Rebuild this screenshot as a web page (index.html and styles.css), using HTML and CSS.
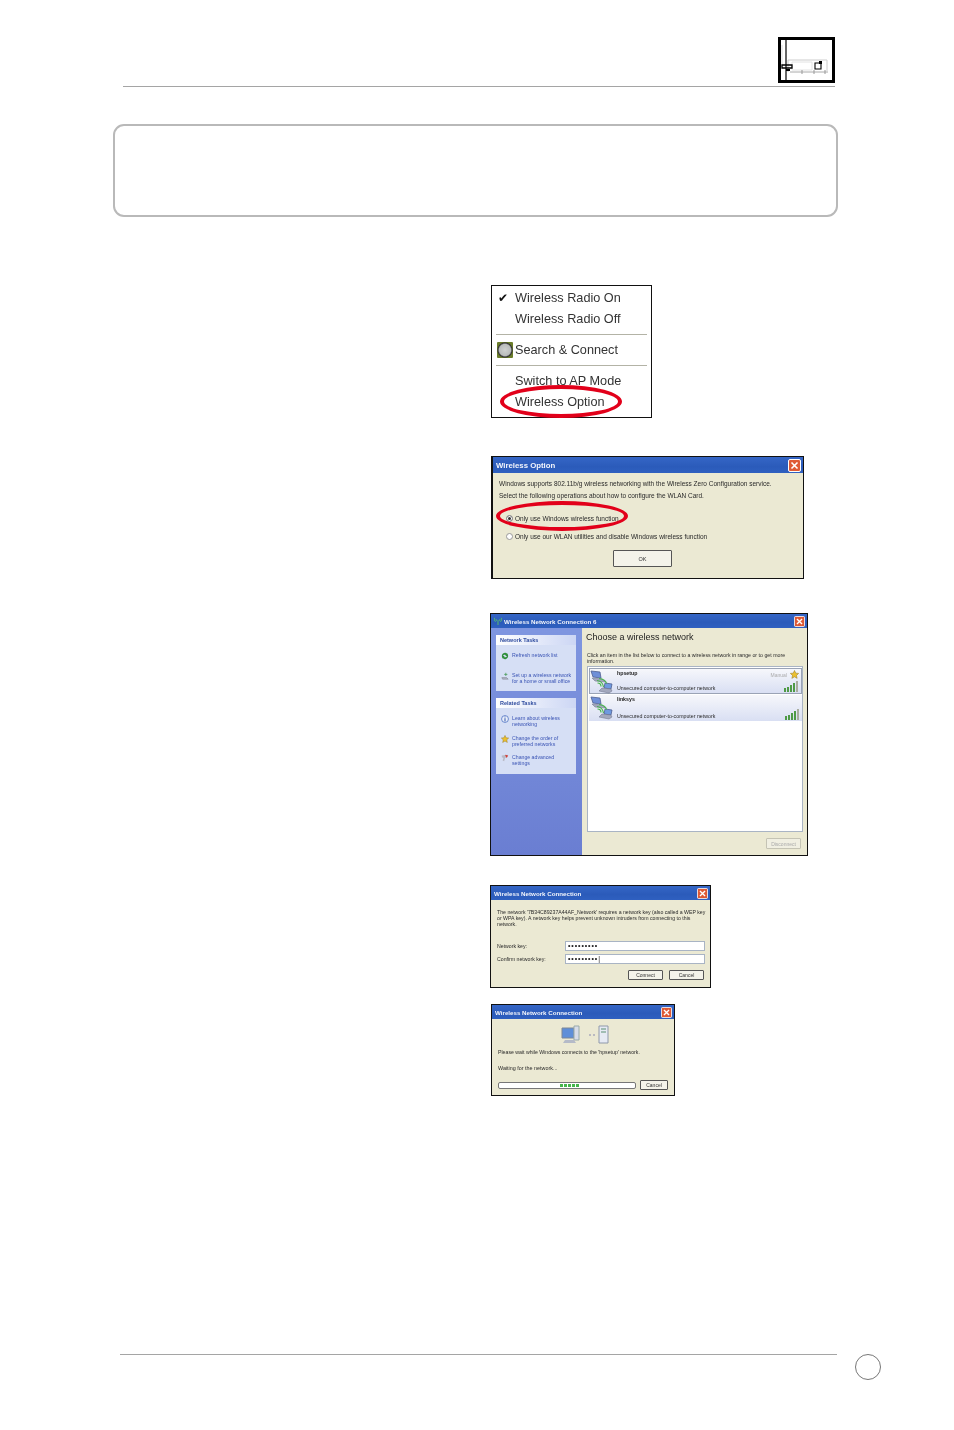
FILE: index.html
```html
<!DOCTYPE html>
<html lang="en">
<head>
  <meta charset="utf-8">
  <title>Wireless Option</title>
  <link rel="stylesheet" href="styles.css">
</head>
<body>
  <svg class="defs" aria-hidden="true">
    <symbol id="ico-close" viewBox="0 0 13 13">
      <rect x="0.5" y="0.5" width="12" height="12" rx="1.5" fill="#df5a35" stroke="#fff"/>
      <path d="M3.5 3.5l6 6M9.5 3.5l-6 6" stroke="#fff" stroke-width="1.6"/>
    </symbol>
    <symbol id="ico-star" viewBox="0 0 10 10">
      <path d="M5 .5l1.4 3 3.2.3-2.4 2.2.7 3.3L5 7.6 2.1 9.3l.7-3.3L.4 3.8l3.2-.3z" fill="#ecc02e" stroke="#9a7d22" stroke-width=".6"/>
    </symbol>
    <symbol id="ico-net" viewBox="0 0 24 24">
      <path d="M1 1l9 1 1 6-8-1z" fill="#6f8fd8" stroke="#4f5f90" stroke-width=".8"/>
      <path d="M2 8l10 1 3 3-10-1z" fill="#a3a8bd" stroke="#6a7088" stroke-width=".5"/>
      <path d="M15 13l7 1-1 5-7-1z" fill="#6f9ae0" stroke="#4f5f90" stroke-width=".8"/>
      <path d="M12 18l9 1 1 2-3 2-10-2z" fill="#a3a8bd" stroke="#6a7088" stroke-width=".5"/>
      <path d="M7 10.500c4 .5 6 3 6.500 6.500M9 8.500c4.500 .5 7 3 7.500 5M7.500 13c2 0 3.500 1.500 3.500 3.500" fill="none" stroke="#46b54b" stroke-width="1.200"/>
    </symbol>
    <symbol id="ico-bars" viewBox="0 0 15 11">
      <path d="M0 7h2v4H0z" fill="#4f9a46"/>
      <path d="M3 6h2v5H3z" fill="#4f9a46"/>
      <path d="M6 4h2v7H6z" fill="#4f9a46"/>
      <path d="M9 2h2v9H9z" fill="#4f9a46"/>
      <path d="M12 0h2v11h-2z" fill="#a9ad9f"/>
    </symbol>
  </svg>

  <div class="page">
    <header class="page-head">
      <svg class="chapter-mark" viewBox="0 0 57 46">
        <rect x="1.500" y="1.500" width="54" height="43" fill="#fff" stroke="#000" stroke-width="3"/>
        <path d="M8 2v42" stroke="#000" stroke-width="1.200"/>
        <path d="M4 8v22" stroke="#ddd"/>
        <path d="M10 23h39v11M10 23v12" fill="none" stroke="#ccc"/>
        <path d="M14 25h20v8H14z" fill="none" stroke="#e2e2e2"/>
        <path d="M12 35h38" stroke="#aaa"/>
        <path d="M24 33v4M36 33v4M47 33v4" stroke="#999"/>
        <path d="M37 26h6v6h-6z" fill="none" stroke="#000" stroke-width="1.100"/>
        <path d="M41 24h3v3h-3z" fill="#000"/>
        <path d="M4 28h10v3H4z" fill="none" stroke="#000" stroke-width="1.300"/>
        <path d="M8 32h4v2H8z" fill="#000"/>
      </svg>
    </header>

    <div class="note-box"></div>

    <main class="shots">
      <section class="shot tray-menu">
        <div class="tray-item"><span class="tray-tick">&#10004;</span>Wireless Radio On</div>
        <div class="tray-item">Wireless Radio Off</div>
        <hr class="tray-sep">
        <div class="tray-item">
          <span class="tray-search"></span>Search &amp; Connect
        </div>
        <hr class="tray-sep">
        <div class="tray-item tray-gap">Switch to AP Mode</div>
        <div class="tray-item">Wireless Option</div>
        <span class="ring ring-menu"></span>
      </section>

      <section class="shot xp option-dialog">
        <div class="titlebar">Wireless Option<svg class="close"><use href="#ico-close"/></svg></div>
        <div class="option-body">
          <p>Windows supports 802.11b/g wireless networking with the Wireless Zero Configuration service.</p>
          <p>Select the following operations about how to configure the WLAN Card.</p>
          <label class="radio first"><span class="radio-dot on"></span>Only use Windows wireless function</label>
          <label class="radio"><span class="radio-dot"></span>Only use our WLAN utilities and disable Windows wireless function</label>
          <div class="btn ok">OK</div>
        </div>
        <span class="ring ring-option"></span>
      </section>

      <section class="shot xp wzc">
        <div class="titlebar small">
          <svg class="wzc-ico" viewBox="0 0 10 10"><path d="M5 10V4M1 1c-1 2-1 3 1 5M9 1c1 2 1 3-1 5M3 2.500c-.6 1-.6 1.500 .5 2.500M7 2.500c.6 1 .6 1.500-.5 2.500" fill="none" stroke="#5fd05a"/></svg>
          Wireless Network Connection 6
          <svg class="close"><use href="#ico-close"/></svg>
        </div>
        <div class="wzc-main">
          <aside class="wzc-side">
            <div class="task-box tasks-a">
              <h4>Network Tasks</h4>
              <div class="task">
                <svg viewBox="0 0 10 10"><path d="M1 5a4 4 0 0 1 7-2.500V1l1 4H5l1.500-1A2.500 2.500 0 0 0 2.500 5zM9 5a4 4 0 0 1-7 2.500V9L1 5h4L3.500 6A2.500 2.500 0 0 0 7.500 5z" fill="#2f8f3c"/></svg>
                <span>Refresh network list</span>
              </div>
              <div class="task">
                <svg viewBox="0 0 10 10"><path d="M1 7h6l2 2H2z" fill="#b3b8c8" stroke="#667" stroke-width=".5"/><path d="M6 1v4M4 3h4" stroke="#4a9c5a"/></svg>
                <span>Set up a wireless network<br>for a home or small office</span>
              </div>
            </div>
            <div class="task-box tasks-b">
              <h4>Related Tasks</h4>
              <div class="task">
                <svg viewBox="0 0 10 10"><circle cx="5" cy="5" r="4.300" fill="#e8eefa" stroke="#4f72c4"/><path d="M5 4v4M5 2v1" stroke="#2c50a8" stroke-width="1.200"/></svg>
                <span>Learn about wireless<br>networking</span>
              </div>
              <div class="task">
                <svg><use href="#ico-star"/></svg>
                <span>Change the order of<br>preferred networks</span>
              </div>
              <div class="task">
                <svg viewBox="0 0 10 10"><path d="M1 2l7-1-1 3-2 1-1 4-2-1 1-3-2-1z" fill="#b9b9c4"/><path d="M5 1l4 1-2 3z" fill="#d33b34"/></svg>
                <span>Change advanced<br>settings</span>
              </div>
            </div>
          </aside>
          <div class="wzc-right">
            <h3>Choose a wireless network</h3>
            <p>Click an item in the list below to connect to a wireless network in range or to get more information.</p>
            <div class="net-list">
              <div class="net-row picked">
                <svg class="net-ico"><use href="#ico-net"/></svg>
                <div class="net-text">
                  <strong>hpsetup</strong>
                  <span>Unsecured computer-to-computer network</span>
                </div>
                <div class="net-side">
                  <div class="net-manual">Manual<svg><use href="#ico-star"/></svg></div>
                  <svg class="net-bars"><use href="#ico-bars"/></svg>
                </div>
              </div>
              <div class="net-row">
                <svg class="net-ico"><use href="#ico-net"/></svg>
                <div class="net-text">
                  <strong>linksys</strong>
                  <span>Unsecured computer-to-computer network</span>
                </div>
                <div class="net-side">
                  <svg class="net-bars"><use href="#ico-bars"/></svg>
                </div>
              </div>
            </div>
            <div class="btn disconnect">Disconnect</div>
          </div>
        </div>
      </section>

      <section class="shot xp key-dialog">
        <div class="titlebar small">Wireless Network Connection<svg class="close"><use href="#ico-close"/></svg></div>
        <div class="key-body">
          <p>The network '7B34C89237A44AF_Network' requires a network key (also called a WEP key<br>or WPA key). A network key helps prevent unknown intruders from connecting to this<br>network.</p>
          <div class="key-row"><span>Network key:</span><div class="key-input">&#8226;&#8226;&#8226;&#8226;&#8226;&#8226;&#8226;&#8226;&#8226;</div></div>
          <div class="key-row"><span>Confirm network key:</span><div class="key-input caret">&#8226;&#8226;&#8226;&#8226;&#8226;&#8226;&#8226;&#8226;&#8226;</div></div>
          <div class="key-btns">
            <div class="btn">Connect</div>
            <div class="btn">Cancel</div>
          </div>
        </div>
      </section>

      <section class="shot xp wait-dialog">
        <div class="titlebar small">Wireless Network Connection<svg class="close"><use href="#ico-close"/></svg></div>
        <div class="wait-body">
          <svg class="wait-art" viewBox="0 0 50 20">
            <path d="M2 3h12v10H2z" fill="#5f8fd8" stroke="#7d8797"/>
            <path d="M14 1h5v14h-5z" fill="#d8dde8" stroke="#9aa"/>
            <path d="M5 15h9l2 3H3z" fill="#b4bac8"/>
            <circle cx="30" cy="10" r="1" fill="#aab"/>
            <circle cx="34" cy="10" r="1" fill="#aab"/>
            <path d="M39 1h9v17h-9z" fill="#e6eaf3" stroke="#8f99aa"/>
            <path d="M41 4h5M41 7h5" stroke="#5a8f72"/>
          </svg>
          <p class="wait-msg">Please wait while Windows connects to the 'hpsetup' network.</p>
          <p class="wait-status">Waiting for the network...</p>
          <div class="wait-row">
            <div class="progress"><i></i><i></i><i></i><i></i><i></i></div>
            <div class="btn">Cancel</div>
          </div>
        </div>
      </section>
    </main>

    <footer class="page-foot">
      <div class="foot-rule"></div>
      <div class="page-no"></div>
    </footer>
  </div>
</body>
</html>
```

FILE: styles.css
```css
/* Page frame */
html, body {
  margin: 0;
  padding: 0;
  background: #fff;
}

.defs {
  display: none;
}

.page {
  width: 954px;
  height: 1430px;
  box-sizing: border-box;
  padding-top: 37px;
  display: flex;
  flex-direction: column;
  overflow: hidden;
  font-family: "Liberation Sans", Arial, sans-serif;
  color: #222;
}

.page-head {
  margin-left: 123px;
  width: 712px;
  height: 49px;
  display: flex;
  justify-content: flex-end;
  align-items: flex-start;
  border-bottom: 1px solid #a5a5a5;
}

.chapter-mark {
  width: 57px;
  height: 46px;
}

.note-box {
  margin: 37px 0 0 113px;
  width: 725px;
  height: 93px;
  box-sizing: border-box;
  border: 2px solid #b9b9b9;
  border-radius: 11px;
}

/* Screenshot column */
.shots {
  padding-left: 490px;
  display: flex;
  flex-direction: column;
  align-items: flex-start;
}

.shot {
  position: relative;
  box-sizing: border-box;
  border: 1px solid #111;
  filter: blur(0.4px);
}

.tray-menu {
  margin: 68px 0 0 1px;
  width: 161px;
  height: 133px;
  padding-top: 2px;
  background: #fff;
  font-size: 12.700px;
  color: #333;
}

.tray-item {
  position: relative;
  height: 21px;
  line-height: 21px;
  padding-left: 23px;
  white-space: nowrap;
}

.tray-gap {
  margin-top: 5px;
}

.tray-tick {
  position: absolute;
  left: 6px;
  font-size: 12px;
  color: #111;
}

.tray-search {
  position: absolute;
  left: 5px;
  top: 2px;
  width: 16px;
  height: 16px;
  background: radial-gradient(circle, #cfd1d1 0, #b9bcbc 50%, #333 62%, #6b7d2a 72%);
  border-radius: 1px;
}

.tray-sep {
  margin: 4px 4px 5px;
  border: 0;
  border-top: 1px solid #b3b3a6;
}

.ring {
  position: absolute;
  box-sizing: border-box;
  border: 4px solid #e2001a;
  border-radius: 50%;
}

.ring-menu {
  left: 8px;
  bottom: -1px;
  width: 122px;
  height: 33px;
}

.ring-option {
  left: 3px;
  top: 44px;
  width: 132px;
  height: 30px;
}

/* XP style dialogs */
.xp {
  background: #ebe9d3;
  font-size: 6.500px;
  color: #2a2a2a;
}

.titlebar {
  height: 16px;
  padding-left: 3px;
  display: flex;
  align-items: center;
  background: linear-gradient(180deg, #3566c6 0%, #2b5bba 60%, #2f60c0 100%);
  color: #f2f5fc;
  font-size: 7.800px;
  font-weight: bold;
  white-space: nowrap;
}

.titlebar.small {
  height: 14px;
  font-size: 6.200px;
}

.close {
  margin-left: auto;
  margin-right: 2px;
  width: 13px;
  height: 13px;
}

.titlebar.small .close {
  width: 11px;
  height: 11px;
}

.btn {
  box-sizing: border-box;
  height: 11px;
  padding: 0 8px;
  display: flex;
  align-items: center;
  justify-content: center;
  background: #f4f3ea;
  border: 1px solid #555;
  border-radius: 1px;
  font-size: 5.500px;
  color: #333;
}

/* Wireless Option */
.option-dialog {
  margin: 38px 0 0 1px;
  width: 313px;
  height: 123px;
  border-left-width: 2px;
}

.option-body {
  padding: 5px 5px 0 6px;
}

.option-body p {
  margin: 0;
  height: 12px;
  line-height: 12px;
  white-space: nowrap;
}

.radio {
  display: flex;
  align-items: center;
  height: 12px;
  margin-top: 6px;
  white-space: nowrap;
}

.radio.first {
  margin-top: 10px;
}

.radio-dot {
  box-sizing: border-box;
  width: 7px;
  height: 7px;
  margin: 0 2px 0 7px;
  border: 1px solid #999;
  border-radius: 50%;
  background: #fff;
}

.radio-dot.on {
  background: #333;
  box-shadow: inset 0 0 0 1px #fff;
}

.btn.ok {
  width: 59px;
  height: 17px;
  margin: 8px 0 0 114px;
}

/* Choose a wireless network */
.wzc {
  margin-top: 34px;
  width: 318px;
  height: 243px;
}

.wzc-ico {
  width: 8px;
  height: 8px;
  margin-right: 2px;
}

.wzc-main {
  display: flex;
  height: 227px;
}

.wzc-side {
  width: 91px;
  padding: 7px 6px 7px 5px;
  box-sizing: border-box;
  background: linear-gradient(180deg, #7f96e0 0%, #6a7ed2 100%);
}

.task-box {
  background: #d6dff5;
  font-size: 5.200px;
  color: #3b55b5;
}

.tasks-a {
  height: 56px;
}

.tasks-b {
  margin-top: 7px;
  height: 76px;
}

.task-box h4 {
  margin: 0;
  height: 10px;
  line-height: 10px;
  padding-left: 4px;
  background: linear-gradient(90deg, #fff, #ccd6f4);
  font-size: 5.500px;
  color: #2f4c9f;
}

.task {
  display: flex;
  align-items: flex-start;
  padding: 7px 0 0 5px;
  line-height: 6px;
  white-space: nowrap;
}

.task svg {
  flex: none;
  width: 8px;
  height: 8px;
  margin-right: 3px;
}

.tasks-a .task + .task {
  padding-top: 12px;
}

.tasks-b .task + .task {
  padding-top: 7.500px;
}

.wzc-right {
  flex: 1;
  padding: 3px 4px 0 4px;
}

.wzc-right h3 {
  margin: 0;
  font-size: 9px;
  line-height: 12px;
  font-weight: normal;
  color: #222;
}

.wzc-right p {
  margin: 10px 0 0 1px;
  font-size: 5.250px;
  line-height: 5.500px;
}

.net-list {
  margin: 2px 0 0 1px;
  box-sizing: border-box;
  width: 216px;
  height: 166px;
  padding: 1px 0 0 1px;
  background: #fff;
  border: 1px solid #a9b4c4;
}

.net-row {
  display: flex;
  box-sizing: border-box;
  width: 213px;
  height: 26px;
  margin-bottom: 1px;
  padding: 1px 2px 1px 1px;
  background: linear-gradient(180deg, #f6f7fb, #d9dff3);
}

.net-row.picked {
  border: 1px solid #9aa3b5;
  padding-left: 0;
}

.net-ico {
  width: 24px;
  height: 24px;
  flex: none;
}

.net-text {
  margin-left: 3px;
  display: flex;
  flex-direction: column;
  justify-content: space-between;
  font-size: 5.250px;
  line-height: 7px;
  white-space: nowrap;
}

.net-text strong {
  color: #222;
}

.net-side {
  margin-left: auto;
  display: flex;
  flex-direction: column;
  align-items: flex-end;
  justify-content: flex-end;
  font-size: 5px;
  color: #aaa;
}

.net-manual {
  display: flex;
  align-items: center;
  gap: 3px;
  margin-bottom: 2px;
}

.net-manual svg {
  width: 9px;
  height: 9px;
}

.net-bars {
  width: 15px;
  height: 11px;
}

.btn.disconnect {
  margin: 6px 2px 0 auto;
  width: 35px;
  padding: 0;
  background: #f0efe2;
  border-color: #c4c3b4;
  color: #aaa;
  font-size: 5px;
}

/* Network key */
.key-dialog {
  margin-top: 29px;
  width: 221px;
  height: 103px;
}

.key-body {
  padding: 9px 5px 0 6px;
  font-size: 5.200px;
}

.key-body p {
  margin: 0;
  line-height: 6px;
  white-space: nowrap;
}

.key-row {
  display: flex;
  align-items: center;
  height: 10px;
  margin-top: 3px;
}

.key-body p + .key-row {
  margin-top: 14px;
}

.key-row span {
  width: 68px;
}

.key-input {
  box-sizing: border-box;
  width: 140px;
  height: 10px;
  padding-left: 2px;
  line-height: 8px;
  font-size: 7px;
  font-weight: bold;
  letter-spacing: .9px;
  background: #fff;
  border: 1px solid #a9b4c4;
  color: #222;
}

.key-input.caret::after {
  content: "|";
  font-weight: normal;
}

.key-btns {
  display: flex;
  justify-content: flex-end;
  gap: 6px;
  margin: 6px 1px 0 0;
}

.key-btns .btn {
  width: 35px;
  height: 10px;
  padding: 0;
  font-size: 5px;
}

/* Waiting for the network */
.wait-dialog {
  margin: 16px 0 0 1px;
  width: 184px;
  height: 92px;
}

.wait-body {
  padding: 0 6px;
  font-size: 5.200px;
}

.wait-body p {
  margin: 0;
  line-height: 7px;
}

.wait-art {
  display: block;
  width: 50px;
  height: 20px;
  margin: 6px 0 4px 62px;
}

.wait-body .wait-status {
  margin-top: 9px;
  font-size: 5.400px;
}

.wait-row {
  display: flex;
  align-items: center;
  gap: 4px;
  margin-top: 8px;
}

.wait-row .btn {
  width: 28px;
  height: 10px;
  padding: 0;
  font-size: 5px;
}

.progress {
  box-sizing: border-box;
  width: 138px;
  height: 7px;
  padding-left: 5px;
  display: flex;
  justify-content: center;
  align-items: center;
  gap: 1px;
  background: #fff;
  border: 1px solid #777;
  border-radius: 2px;
}

.progress i {
  width: 3px;
  height: 3px;
  background: #46b54b;
}

/* Footer */
.page-foot {
  margin-top: auto;
  padding-bottom: 50px;
  display: flex;
  align-items: flex-start;
}

.foot-rule {
  margin-left: 120px;
  width: 717px;
  border-top: 1px solid #a5a5a5;
}

.page-no {
  margin-left: 18px;
  width: 26px;
  height: 26px;
  box-sizing: border-box;
  border: 1px solid #777;
  border-radius: 50%;
}
```
